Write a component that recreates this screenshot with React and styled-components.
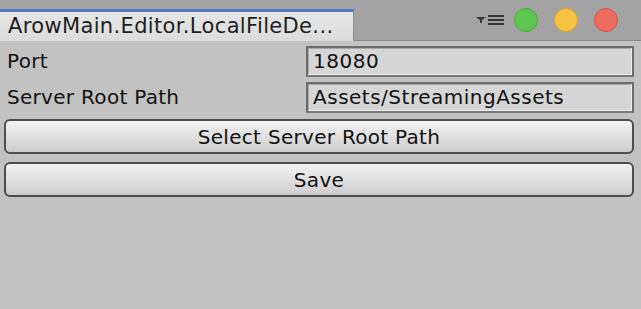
import React from "react";
import styled, { createGlobalStyle } from "styled-components";

const Global = createGlobalStyle`
  body {
    margin: 0;
    background: #c2c2c2;
    font-family: "DejaVu Sans", "Liberation Sans", sans-serif;
  }
`;

const Window = styled.div`
  width: 641px;
  height: 309px;
  background: #c2c2c2;
  display: flex;
  flex-direction: column;
  overflow: hidden;
`;

const TitleBar = styled.div`
  height: 41px;
  box-sizing: border-box;
  background: #a3a3a3;
  border-bottom: 1px solid #8a8a8a;
  display: flex;
  align-items: flex-end;
  justify-content: space-between;
`;

const Tab = styled.div`
  width: 354px;
  height: 32px;
  box-sizing: border-box;
  margin-bottom: -1px;
  border-top: 3px solid #4a7bc4;
  border-right: 1px solid #8e8e8e;
  background: linear-gradient(#e6e6e6, #dcdcdc);
  color: #1e1e1e;
  font-size: 21px;
  letter-spacing: 0.35px;
  line-height: 28px;
  padding-left: 8px;
  white-space: nowrap;
  overflow: hidden;
`;

const Controls = styled.div`
  display: flex;
  align-items: center;
  gap: 16px;
  height: 41px;
  padding-right: 23px;
`;

const MenuIcon = styled.svg`
  display: block;
  margin-right: -6px;
`;

const Dot = styled.div`
  width: 24px;
  height: 24px;
  border-radius: 50%;
  box-sizing: border-box;
  background: ${(p) => p.$fill};
  border: 1px solid ${(p) => p.$edge};
`;

const Body = styled.div`
  display: flex;
  flex-direction: column;
  padding: 4px 7px 0 4px;
`;

const Row = styled.div`
  display: flex;
  align-items: center;
  height: 32px;
  margin-bottom: 4px;
`;

const Label = styled.div`
  width: 300px;
  padding-left: 3px;
  font-size: 20px;
  letter-spacing: 0.3px;
  color: #111;
`;

const Field = styled.div`
  width: 329px;
  height: 31px;
  box-sizing: border-box;
  background: #d6d6d6;
  border: 2px solid #6c6c6c;
  border-bottom-color: #7a7a7a;
  box-shadow: inset -1px -1px 0 #ececec, inset 1px 1px 0 #a8a8a8;
  font-size: 20px;
  letter-spacing: 0.5px;
  color: #111;
  line-height: 27px;
  padding-left: 5px;
`;

const Button = styled.button`
  width: 630px;
  height: 35px;
  box-sizing: border-box;
  margin: ${(p) => p.$top}px 0 0 0;
  border: 2px solid #4e4e4e;
  border-radius: 6px;
  background: linear-gradient(#f3f3f3, #cdcdcd);
  font-family: "DejaVu Sans", "Liberation Sans", sans-serif;
  font-size: 20px;
  letter-spacing: 0.3px;
  color: #111;
  padding: 0;
`;

export default function App() {
  return (
    <Window>
      <Global />
      <TitleBar>
        <Tab>ArowMain.Editor.LocalFileDe...</Tab>
        <Controls>
          <MenuIcon width="28" height="10" viewBox="0 0 28 10">
            <path d="M0 2h10l-5 4z" fill="#3a3a3a" />
            <rect x="4" y="5" width="2" height="3" fill="#3a3a3a" />
            <rect x="12" y="0" width="16" height="2" fill="#333" />
            <rect x="12" y="4" width="16" height="2" fill="#333" />
            <rect x="12" y="8" width="16" height="2" fill="#333" />
          </MenuIcon>
          <Dot $fill="#5fc751" $edge="#4aa83d" />
          <Dot $fill="#f6c343" $edge="#dca52c" />
          <Dot $fill="#ee6b5f" $edge="#d4544a" />
        </Controls>
      </TitleBar>
      <Body>
        <Row>
          <Label>Port</Label>
          <Field>18080</Field>
        </Row>
        <Row>
          <Label>Server Root Path</Label>
          <Field>Assets/StreamingAssets</Field>
        </Row>
        <Button $top={2}>Select Server Root Path</Button>
        <Button $top={8}>Save</Button>
      </Body>
    </Window>
  );
}
